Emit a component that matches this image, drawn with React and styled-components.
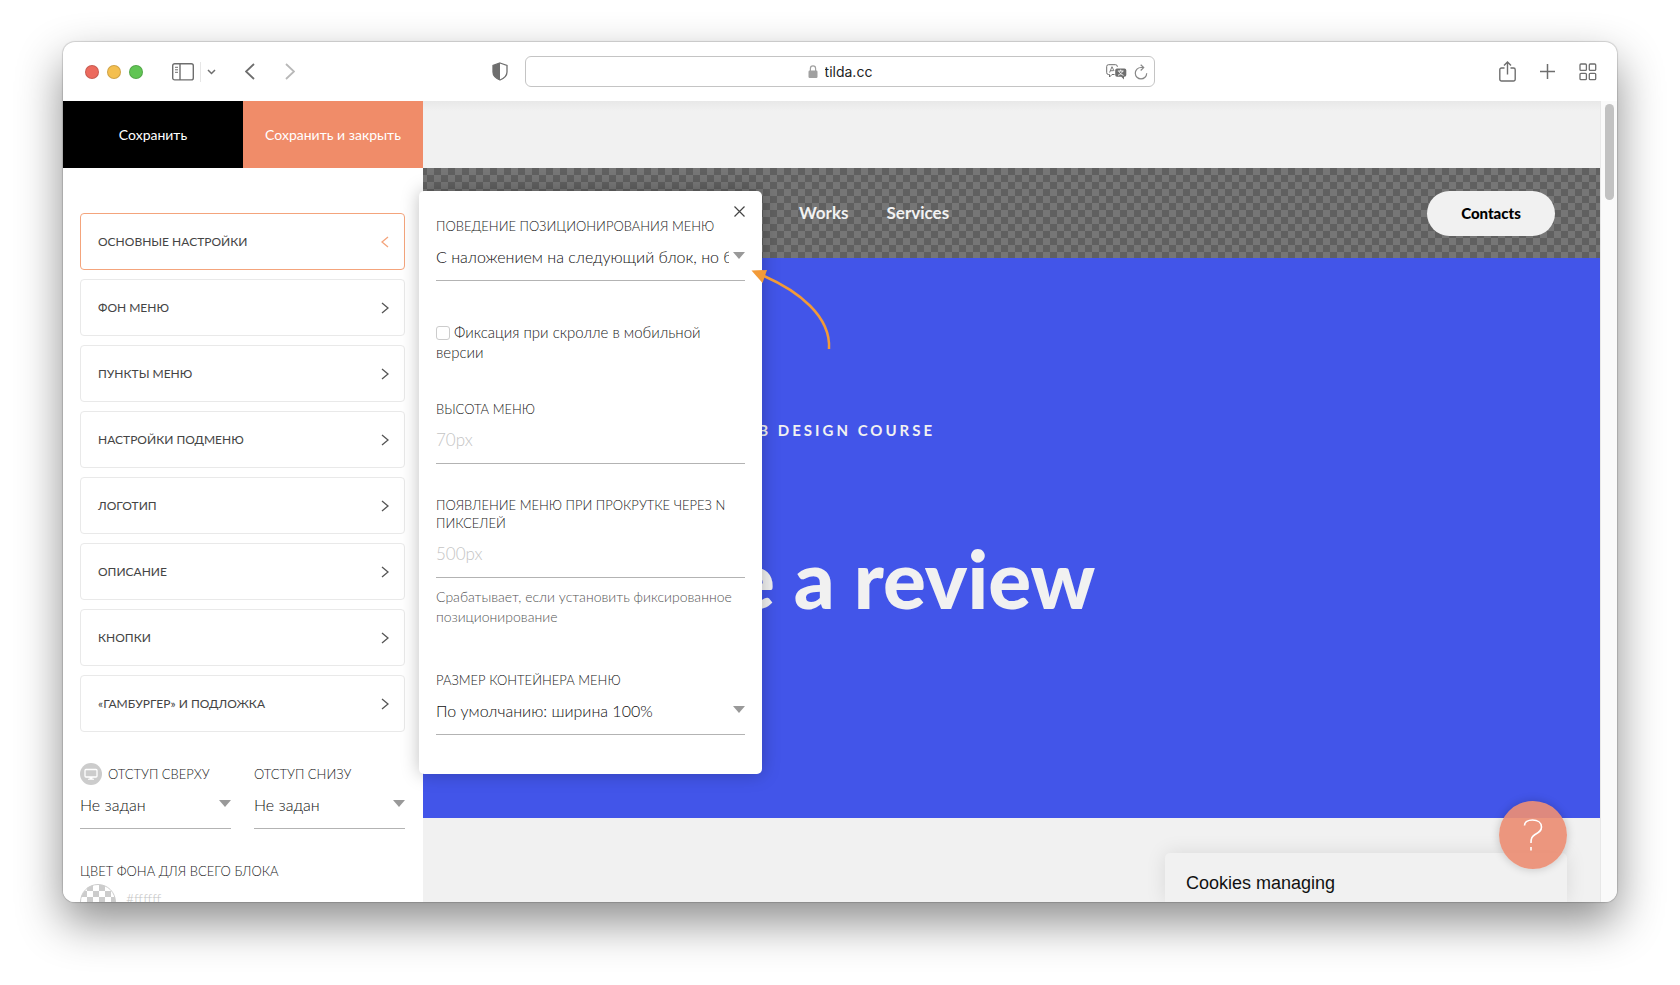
import React from "react";
import styled, { createGlobalStyle, css } from "styled-components";

const GlobalStyle = createGlobalStyle`
    * {
        box-sizing: border-box;
    }
    body {
        margin: 0;
        background: #fff;
        font-family: Lato, "Open Sans", sans-serif;
        color: #333;
    }
    button, input, select {
        font: inherit;
        color: inherit;
    }
    button {
        cursor: pointer;
    }
`

/* browser window */

const Desktop = styled.div`
    height: 100vh;
    padding: 42px 63px 83px;
    overflow: hidden;
`
const BrowserWindow = styled.div`
    height: 100%;
    display: flex;
    flex-direction: column;
    overflow: hidden;
    border-radius: 12px;
    background: #fff;
    box-shadow: 0 0 1px 1px rgba(0, 0, 0, 0.15), 0 20px 46px rgba(0, 0, 0, 0.45);
`
const Toolbar = styled.header`
    flex: none;
    height: 59px;
    display: grid;
    grid-template-columns: minmax(0, 1fr) minmax(0, 630px) minmax(0, 1fr);
    align-items: center;
    padding: 0 20px;
    color: #6e6e6e;
`
const ToolGroup = styled.div`
    display: flex;
    align-items: center;
    justify-content: ${props => props.$end ? "flex-end" : "flex-start"};
    gap: ${props => props.$gap || 0}px;
`
const Lights = styled.div`
    display: flex;
    gap: 8px;
    margin: 0 29px 0 2px;
`
const Light = styled.button`
    width: 14px;
    height: 14px;
    padding: 0;
    border: 1px solid rgba(0, 0, 0, 0.15);
    border-radius: 50%;
    background: ${props => props.$color};
`
const ToolButton = styled.button`
    display: flex;
    padding: 0;
    border: 0;
    background: none;
    color: ${props => props.$dim ? "#b8b8b8" : "inherit"};
    svg {
        display: block;
    }
`
const Divider = styled.span`
    width: 1px;
    height: 20px;
    background: #e6e6e6;
`
const NavArrows = styled.div`
    display: flex;
    gap: 30px;
    margin-left: 29px;
`
const Shield = styled(ToolButton)`
    margin: 0 17px 0 auto;
`
const AddressBar = styled.div`
    height: 31px;
    display: grid;
    grid-template-columns: 1fr auto 1fr;
    align-items: center;
    padding: 0 6px;
    border: 1px solid #c4c4c4;
    border-radius: 6px;
`
const Address = styled.label`
    grid-column: 2;
    display: flex;
    align-items: center;
    gap: 7px;
    font-family: Inter, "Liberation Sans", sans-serif;
    font-size: 14px;
    color: #222;
    input {
        field-sizing: content;
        padding: 0;
        border: 0;
        outline: 0;
        background: none;
    }
`

/* page under the settings panel */

const Page = styled.div`
    flex: 1;
    min-height: 0;
    display: grid;
    grid-template-columns: minmax(0, 1fr) 17px;
    grid-template-rows: minmax(0, 1fr);
    position: relative;
`
const Site = styled.main`
    grid-area: 1 / 1;
    overflow: hidden;
    background: #f1f1f1;
`
const TopStrip = styled.div`
    height: 67px;
    background: linear-gradient(#e8e8e8, #f1f1f1 10px);
`
const SiteNav = styled.nav`
    height: 90px;
    display: grid;
    grid-template-columns: 1fr auto 1fr;
    align-items: center;
    padding: 0 45px;
    background: repeating-conic-gradient(#606060 0 25%, #767676 0 50%) 0 0 / 14px 14px;
`
const NavLinks = styled.div`
    grid-column: 2;
    display: flex;
    gap: 38px;
`
const NavLink = styled.a`
    color: #f2f2f2;
    font-size: 17px;
    font-weight: 700;
    line-height: 24px;
    text-decoration: none;
`
const ContactsLink = styled.a`
    justify-self: end;
    width: 128px;
    padding: 12px 0;
    border-radius: 23px;
    background: #f1f1f1;
    color: #000;
    font-size: 15px;
    font-weight: 900;
    line-height: 21px;
    text-align: center;
    text-decoration: none;
`
const Cover = styled.section`
    height: 560px;
    padding-top: 162px;
    background: #4255e9;
    color: #f1f1f1;
    text-align: center;
`
const Kicker = styled.p`
    margin: 0 0 94px;
    font-size: 15px;
    font-weight: 700;
    letter-spacing: 3px;
    line-height: 20px;
`
const Title = styled.h1`
    margin: 0;
    font-size: 80px;
    font-weight: 900;
    line-height: 88px;
`
const Scrollbar = styled.div`
    grid-area: 1 / 2;
    padding: 3px 3px 0 4px;
    border-left: 1px solid #e8e8e8;
    background: #fafafa;
`
const Thumb = styled.div`
    height: 96px;
    border-radius: 5px;
    background: #c2c2c2;
`
const Cookies = styled.aside`
    position: absolute;
    right: 50px;
    bottom: 0;
    width: 402px;
    height: 49px;
    padding: 20px 21px 0;
    border-radius: 5px 5px 0 0;
    background: #f1f1f1;
    box-shadow: 0 0 20px rgba(0, 0, 0, 0.1);
    color: #111;
    font-family: "Liberation Sans", Arial, sans-serif;
    font-size: 18px;
    line-height: 21px;
`
const HelpButton = styled.button`
    position: absolute;
    right: 50px;
    bottom: 33px;
    width: 68px;
    height: 68px;
    display: flex;
    align-items: center;
    justify-content: center;
    padding: 0;
    border: 0;
    border-radius: 50%;
    background: rgba(236, 142, 116, 0.92);
    box-shadow: 0 0 10px rgba(0, 0, 0, 0.2);
`

/* settings panel */

const Sidebar = styled.aside`
    grid-area: 1 / 1;
    position: relative;
    z-index: 1;
    width: 360px;
    overflow: hidden;
    background: #fff;
`
const SaveBar = styled.div`
    display: grid;
    grid-template-columns: 1fr 1fr;
`
const SaveButton = styled.button`
    height: 67px;
    padding: 0;
    border: 0;
    background: ${props => props.$close ? "#f08c69" : "#000"};
    color: #fff;
    font-size: 14px;
`
const SidebarBody = styled.div`
    padding: 45px 18px 0 17px;
`
const Sections = styled.div`
    display: flex;
    flex-direction: column;
    gap: 9px;
    margin-bottom: 33px;
`
const SectionButton = styled.button`
    height: 57px;
    display: flex;
    align-items: center;
    justify-content: space-between;
    padding: 0 15px 0 17px;
    border: 1px solid ${props => props.$active ? "#f4a47c" : "#e9e9e9"};
    border-radius: 4px;
    background: #fff;
    color: #444;
    font-size: 12px;
    text-transform: uppercase;
    svg {
        color: ${props => props.$active ? "#f4a47c" : "#555"};
    }
`
const Columns = styled.div`
    display: grid;
    grid-template-columns: 1fr 1fr;
    gap: 23px;
    margin-bottom: 33px;
`
const FieldLabel = styled.label`
    display: flex;
    align-items: center;
    gap: 6px;
    min-height: 18px;
    color: #222;
    font-size: 13px;
    font-weight: 300;
    line-height: 18px;
    text-transform: uppercase;
    svg {
        flex: none;
        margin: -3px 0;
    }
`
const control = css`
    display: block;
    width: 100%;
    height: 46px;
    padding: 0 0 2px;
    border: 0;
    border-bottom: 1px solid #b3b3b3;
    border-radius: 0;
    outline: 0;
    background: none;
    color: #111;
    font-size: 17px;
    font-weight: 300;
`
const TextInput = styled.input`
    ${control}
    &::placeholder {
        color: #c4c4c4;
    }
`
const SelectBox = styled.div`
    position: relative;
    &::after {
        content: "";
        position: absolute;
        right: 0;
        top: 17px;
        border: 6px solid transparent;
        border-top: 7px solid #999;
        border-bottom: 0;
        pointer-events: none;
    }
`
const SelectInput = styled.select`
    ${control}
    appearance: none;
    padding-right: 16px;
    font-size: 16px;
    text-overflow: clip;
`
const ColorRow = styled.div`
    display: flex;
    gap: 10px;
    padding-top: 4px;
`
const Swatch = styled.button`
    flex: none;
    width: 36px;
    height: 36px;
    border: 1px solid #ccc;
    border-radius: 50%;
    background: repeating-conic-gradient(#ccc 0 25%, #fff 0 50%) 0 0 / 12px 12px;
`
const ColorInput = styled(TextInput)`
    height: 32px;
    font-size: 14px;
`

/* popup with the main settings */

const Popup = styled.section`
    position: absolute;
    z-index: 2;
    left: 356px;
    top: 90px;
    width: 343px;
    padding: 26px 17px 39px;
    border-radius: 5px;
    background: #fff;
    box-shadow: 0 0 18px rgba(0, 0, 0, 0.25);
`
const CloseButton = styled(ToolButton)`
    position: absolute;
    right: 17px;
    top: 15px;
    color: #444;
`
const Field = styled.div`
    margin-bottom: ${props => props.$space || 0}px;
`
const CheckLabel = styled.label`
    display: block;
    margin-bottom: 38px;
    color: #222;
    font-size: 15px;
    font-weight: 300;
    line-height: 20px;
    input {
        appearance: none;
        width: 14px;
        height: 14px;
        margin: 0 4px 0 0;
        border: 1px solid #ccc;
        border-radius: 3px;
        vertical-align: -2px;
    }
`
const Hint = styled.p`
    margin: 9px 0 0;
    color: #555;
    font-size: 14px;
    font-weight: 300;
    line-height: 20px;
`
const Arrow = styled.svg`
    position: absolute;
    left: 331px;
    top: 74px;
    pointer-events: none;
`

const sections = [
    "Основные настройки",
    "Фон меню",
    "Пункты меню",
    "Настройки подменю",
    "Логотип",
    "Описание",
    "Кнопки",
    "«Гамбургер» и подложка",
]

function Chevron({ left, width = 6, height = 10, stroke = 1.3 }) {
    return (
        <svg width={width + 2} height={height + 2} viewBox={`-1 -1 ${width + 2} ${height + 2}`} fill="none" stroke="currentColor" strokeWidth={stroke}>
            <path d={left ? `M${width} 0L0 ${height / 2}L${width} ${height}` : `M0 0L${width} ${height / 2}L0 ${height}`} />
        </svg>
    )
}

function Select({ id, label, icon, options }) {
    return (
        <>
            <FieldLabel htmlFor={id}>{icon}{label}</FieldLabel>
            <SelectBox>
                <SelectInput id={id}>
                    {options.map(option => <option key={option}>{option}</option>)}
                </SelectInput>
            </SelectBox>
        </>
    )
}

function MonitorIcon() {
    return (
        <svg width="22" height="22" viewBox="0 0 22 22">
            <circle cx="11" cy="11" r="11" fill="#ccc" />
            <rect x="5" y="6.500" width="12" height="7.500" rx="1" fill="none" stroke="#fff" strokeWidth="1.300" />
            <path d="M9.500 14h3v1.800h1.500v1h-6v-1h1.500z" fill="#fff" />
        </svg>
    )
}

function BrowserToolbar() {
    return (
        <Toolbar>
            <ToolGroup>
                <Lights>
                    <Light $color="#ec6a5e" aria-label="Close" />
                    <Light $color="#f4bf4f" aria-label="Minimize" />
                    <Light $color="#61c554" aria-label="Zoom" />
                </Lights>
                <ToolGroup $gap={6}>
                    <ToolButton aria-label="Sidebar">
                        <svg width="22" height="18" viewBox="0 0 22 18" fill="none" stroke="currentColor" strokeWidth="1.400">
                            <rect x="0.700" y="0.700" width="20.600" height="16.200" rx="2" />
                            <path d="M8 1v16" />
                            <path d="M3 4.300h3M3 6.800h3M3 9.300h3" strokeWidth="1" />
                        </svg>
                    </ToolButton>
                    <Divider />
                    <ToolButton aria-label="Tab groups">
                        <svg width="9" height="6" viewBox="0 0 9 6" fill="none" stroke="currentColor" strokeWidth="1.500">
                            <path d="M1 1l3.500 3.500L8 1" />
                        </svg>
                    </ToolButton>
                </ToolGroup>
                <NavArrows>
                    <ToolButton aria-label="Back"><Chevron left width={8} height={15} stroke={1.8} /></ToolButton>
                    <ToolButton $dim aria-label="Forward"><Chevron width={8} height={15} stroke={1.8} /></ToolButton>
                </NavArrows>
                <Shield aria-label="Privacy report">
                    <svg width="16" height="19" viewBox="0 0 16 19">
                        <path d="M8 1L15 3.500V10C15 14 11.500 16.500 8 18C4.500 16.500 1 14 1 10V3.500Z" fill="none" stroke="currentColor" strokeWidth="1.300" />
                        <path d="M8 1V18C4.500 16.500 1 14 1 10V3.500Z" fill="currentColor" />
                    </svg>
                </Shield>
            </ToolGroup>
            <AddressBar>
                <Address>
                    <svg width="10" height="13" viewBox="0 0 10 13">
                        <rect x="0.500" y="5.500" width="9" height="7.500" rx="1.200" fill="#a0a0a0" />
                        <path d="M2.400 6V3.500a2.600 2.600 0 0 1 5.200 0V6" fill="none" stroke="#a0a0a0" strokeWidth="1.200" />
                    </svg>
                    <input aria-label="Address" defaultValue="tilda.cc" />
                </Address>
                <ToolGroup $end $gap={7}>
                    <ToolButton aria-label="Translate">
                        <svg width="21" height="16" viewBox="0 0 21 16" fill="none" stroke="currentColor">
                            <path d="M8.500 10.500H6L3.500 13V10.500H2.500A1.800 1.800 0 0 1 .7 8.700V2.500A1.800 1.800 0 0 1 2.500 .7H9.500A1.800 1.800 0 0 1 11.300 2.500V3" />
                            <path d="M3.600 8.500L6 2.700L8 7M4.400 6.700H7.300" strokeWidth="0.900" />
                            <path d="M11 4.500H18.500A1.800 1.800 0 0 1 20.300 6.300V11A1.800 1.800 0 0 1 18.500 12.800H18V15.500L15.300 12.800H11A1.800 1.800 0 0 1 9.200 11V6.300A1.800 1.800 0 0 1 11 4.500Z" fill="currentColor" stroke="none" />
                            <path d="M11.800 7H17.600M14.700 5.600V7M16.500 7C16 9 14.500 10.500 12 11.300M13 7.200C13.500 9 15 10.500 17.500 11.300" stroke="#fff" strokeWidth="0.900" />
                        </svg>
                    </ToolButton>
                    <ToolButton aria-label="Reload">
                        <svg width="14" height="16" viewBox="0 0 14 16" fill="none" stroke="#888" strokeWidth="1.200">
                            <path d="M9.500 3.500H7A5.700 5.700 0 1 0 12.700 9.200" />
                            <path d="M6.700 .7L9.700 3.600L6.700 6.500" />
                        </svg>
                    </ToolButton>
                </ToolGroup>
            </AddressBar>
            <ToolGroup $end $gap={24}>
                <ToolButton aria-label="Share">
                    <svg width="17" height="21" viewBox="0 0 17 21" fill="none" stroke="currentColor" strokeWidth="1.400">
                        <path d="M5.500 7H2.500A1.700 1.700 0 0 0 .8 8.700V18.300A1.700 1.700 0 0 0 2.500 20H14.500A1.700 1.700 0 0 0 16.200 18.300V8.700A1.700 1.700 0 0 0 14.500 7H11.500" />
                        <path d="M8.500 13.500V1M5 4.500L8.500 1L12 4.500" />
                    </svg>
                </ToolButton>
                <ToolButton aria-label="New tab">
                    <svg width="15" height="15" viewBox="0 0 15 15" stroke="currentColor" strokeWidth="1.500">
                        <path d="M7.500 0v15M0 7.500h15" />
                    </svg>
                </ToolButton>
                <ToolButton aria-label="Tab overview">
                    <svg width="18" height="18" viewBox="0 0 18 18" fill="none" stroke="currentColor" strokeWidth="1.300">
                        <rect x="1" y="1" width="6.400" height="6.400" rx="1" />
                        <rect x="10.300" y="1" width="6.400" height="6.400" rx="1" />
                        <rect x="1" y="10.300" width="6.400" height="6.400" rx="1" />
                        <rect x="10.300" y="10.300" width="6.400" height="6.400" rx="1" />
                    </svg>
                </ToolButton>
            </ToolGroup>
        </Toolbar>
    )
}

function SettingsSidebar() {
    return (
        <Sidebar>
            <SaveBar>
                <SaveButton>Сохранить</SaveButton>
                <SaveButton $close>Сохранить и закрыть</SaveButton>
            </SaveBar>
            <SidebarBody>
                <Sections>
                    {sections.map((name, i) => (
                        <SectionButton key={name} $active={i === 0}>
                            {name}
                            <Chevron left={i === 0} />
                        </SectionButton>
                    ))}
                </Sections>
                <Columns>
                    <div>
                        <Select id="top" label="Отступ сверху" icon={<MonitorIcon />} options={["Не задан"]} />
                    </div>
                    <div>
                        <Select id="bottom" label="Отступ снизу" options={["Не задан"]} />
                    </div>
                </Columns>
                <FieldLabel htmlFor="color">Цвет фона для всего блока</FieldLabel>
                <ColorRow>
                    <Swatch aria-label="Выбрать цвет" />
                    <ColorInput id="color" placeholder="#ffffff" />
                </ColorRow>
            </SidebarBody>
        </Sidebar>
    )
}

function MainSettings() {
    return (
        <Popup>
            <CloseButton aria-label="Закрыть">
                <svg width="11" height="11" viewBox="0 0 11 11" stroke="currentColor" strokeWidth="1.200">
                    <path d="M.5 .5l10 10M10.500 .5l-10 10" />
                </svg>
            </CloseButton>
            <Field $space={41}>
                <Select
                    id="position"
                    label="Поведение позиционирования меню"
                    options={["С наложением на следующий блок, но без фиксации"]}
                />
            </Field>
            <CheckLabel>
                <input type="checkbox" />
                Фиксация при скролле в мобильной версии
            </CheckLabel>
            <Field $space={32}>
                <FieldLabel htmlFor="height">Высота меню</FieldLabel>
                <TextInput id="height" placeholder="70px" />
            </Field>
            <Field $space={44}>
                <FieldLabel htmlFor="offset">Появление меню при прокрутке через N пикселей</FieldLabel>
                <TextInput id="offset" placeholder="500px" />
                <Hint>Срабатывает, если установить фиксированное позиционирование</Hint>
            </Field>
            <Field>
                <Select id="container" label="Размер контейнера меню" options={["По умолчанию: ширина 100%"]} />
            </Field>
            <Arrow width="84" height="88" viewBox="0 0 84 88">
                <path d="M14 11C48 26 81 51 79 84" fill="none" stroke="#f29a38" strokeWidth="2.500" />
                <path d="M1.500 5.500L17 5L12.500 18Z" fill="#f29a38" />
            </Arrow>
        </Popup>
    )
}

function App() {
    return (
        <>
            <GlobalStyle />
            <Desktop>
                <BrowserWindow>
                    <BrowserToolbar />
                    <Page>
                        <Site>
                            <TopStrip />
                            <SiteNav>
                                <NavLinks>
                                    <NavLink href="#about">About</NavLink>
                                    <NavLink href="#works">Works</NavLink>
                                    <NavLink href="#services">Services</NavLink>
                                </NavLinks>
                                <ContactsLink href="#contacts">Contacts</ContactsLink>
                            </SiteNav>
                            <Cover>
                                <Kicker>WEB DESIGN COURSE</Kicker>
                                <Title>Leave a review</Title>
                            </Cover>
                        </Site>
                        <Scrollbar><Thumb /></Scrollbar>
                        <SettingsSidebar />
                        <MainSettings />
                        <Cookies>Cookies managing</Cookies>
                        <HelpButton aria-label="Помощь">
                            <svg width="20" height="32" viewBox="0 0 20 32" fill="none" stroke="#fff" strokeWidth="1.600">
                                <path d="M1.500 6.500C1.500 3 5 1 9.500 1C14.500 1 18.500 3.500 18.500 8C18.500 12 15.500 13.500 12 15.500C9 17.500 8 19 8 24M8 28V31.500" />
                            </svg>
                        </HelpButton>
                    </Page>
                </BrowserWindow>
            </Desktop>
        </>
    )
}
export default App
